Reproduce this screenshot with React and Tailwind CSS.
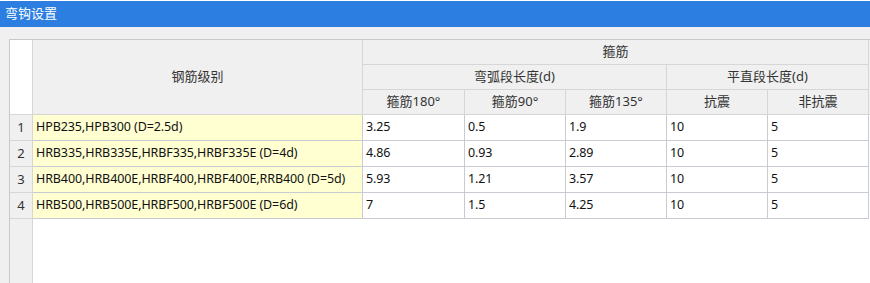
const rows = [
  ['HPB235,HPB300 (D=2.5d)', '3.25', '0.5', '1.9', '10', '5'],
  ['HRB335,HRB335E,HRBF335,HRBF335E (D=4d)', '4.86', '0.93', '2.89', '10', '5'],
  ['HRB400,HRB400E,HRBF400,HRBF400E,RRB400 (D=5d)', '5.93', '1.21', '3.57', '10', '5'],
  ['HRB500,HRB500E,HRBF500,HRBF500E (D=6d)', '7', '1.5', '4.25', '10', '5'],
]

const font = { fontFamily: '"Noto Sans", "Noto Sans CJK SC", sans-serif' }

export default function App() {
  const h = 'flex items-center justify-center border-r border-b border-[#d6d6d6] bg-[#f0f0f0] text-[13px] text-[#333]'
  const cell = 'flex items-center pl-[3px] border-r border-b border-[#c9cbd2] bg-white text-[12.5px] tracking-[-0.1px] text-[#111] whitespace-nowrap'

  return (
    <div className="w-[870px] h-[283px] overflow-hidden flex flex-col bg-[#f0f0f0]" style={font}>
      <div className="h-px bg-white" />
      <div className="h-[26px] bg-[#2c7fe0] text-white text-[13px] flex items-center pl-[5px]">弯钩设置</div>

      <div className="flex-1 min-h-0 mt-[12px] ml-[9px] border-l border-t border-[#c8c8c8] flex flex-col overflow-hidden">
        <div className="grid grid-cols-[23px_330px_102px_101px_101px_101px_101px_40px] grid-rows-[25px_25px_25px_26px_26px_26px_26px]">
          <div className="row-span-3 bg-white border-r border-b border-[#d6d6d6]" />
          <div className={`row-span-3 ${h}`}>钢筋级别</div>
          <div className={`col-span-5 ${h}`}>箍筋</div>
          <div className="row-span-3 bg-[#f0f0f0] border-b border-[#d6d6d6]" />
          <div className={`col-span-3 ${h}`}>弯弧段长度(d)</div>
          <div className={`col-span-2 ${h}`}>平直段长度(d)</div>
          <div className={h}>箍筋180°</div>
          <div className={h}>箍筋90°</div>
          <div className={h}>箍筋135°</div>
          <div className={h}>抗震</div>
          <div className={h}>非抗震</div>

          {rows.map((r, i) => (
            <div key={i} className="contents">
              <div className="flex items-center justify-center border-r border-b border-[#d6d6d6] bg-[#f0f0f0] text-[13px] text-[#333]">{i + 1}</div>
              <div className={`${cell} !bg-[#ffffd2]`}>{r[0]}</div>
              {r.slice(1).map((v, j) => (
                <div key={j} className={cell}>{v}</div>
              ))}
              <div className="bg-white" />
            </div>
          ))}
        </div>

        <div className="flex-1 flex">
          <div className="w-[23px] bg-[#f0f0f0] border-r border-[#d6d6d6]" />
          <div className="flex-1 bg-white" />
        </div>
      </div>
    </div>
  )
}
